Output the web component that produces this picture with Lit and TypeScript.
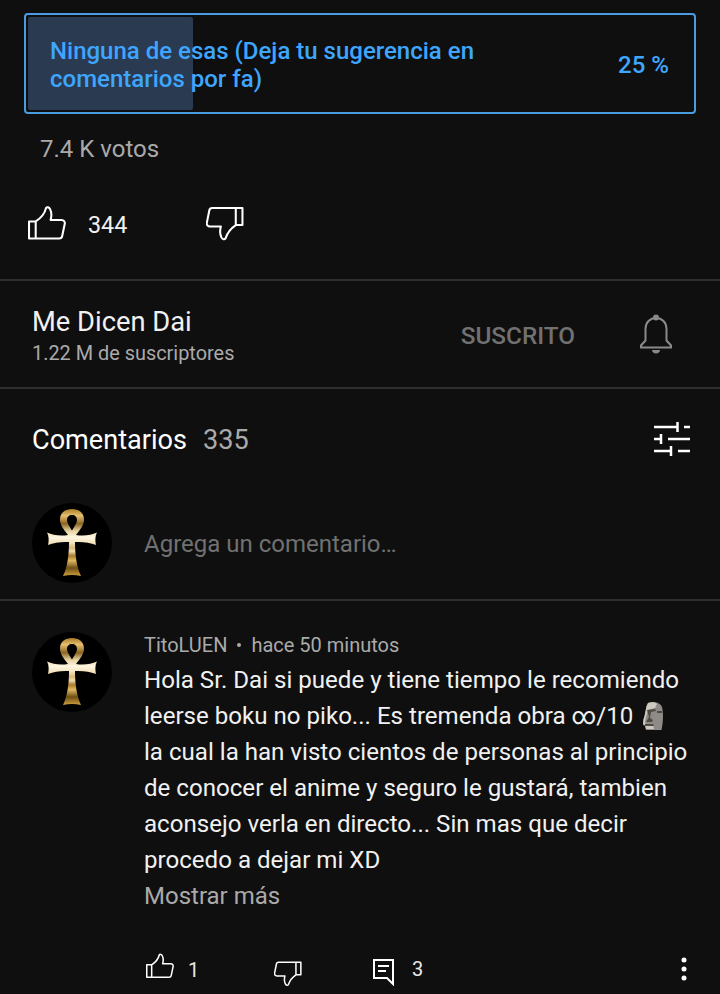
import { LitElement, html, css, svg } from "lit";
import { customElement } from "lit/decorators.js";

const ankh = svg`<svg class="av" viewBox="0 0 80 80" aria-hidden="true">
  <defs><linearGradient id="g" x1="0" y1="0" x2="0" y2="1">
    <stop offset="0" stop-color="#a87c28"/><stop offset=".1" stop-color="#e6bf70"/><stop offset=".22" stop-color="#8a6420"/>
    <stop offset=".33" stop-color="#e8d4a4"/><stop offset=".42" stop-color="#fff6e2"/><stop offset=".5" stop-color="#f4e4c0"/>
    <stop offset=".58" stop-color="#d8b878"/><stop offset=".63" stop-color="#f0dcae"/><stop offset=".7" stop-color="#a87a2a"/>
    <stop offset=".77" stop-color="#e0b860"/><stop offset=".88" stop-color="#6e4e14"/><stop offset="1" stop-color="#d0a040"/></linearGradient></defs>
  <circle cx="40" cy="40" r="40" fill="#000"/>
  <path fill="url(#g)" fill-rule="evenodd" d="M40 6C33 6 28 10 28 16.500 28 22 32 27 36 32 28 33.500 21 32 15 29.500 17 33 17 38 16 42 22 39.500 30 38.500 37 39 37 53 35 65 31 73 37 71.500 43 71.500 49 73 45 65 43 53 43 39 50 38.500 58 39.500 64 42 63 38 63 33 65 29.500 59 32 52 33.500 44 32 48 27 52 22 52 16.500 52 10 47 6 40 6ZM40 12C43 12 45 14 45 17 45 20 42 24 40 27.500 38 24 35 20 35 17 35 14 37 12 40 12Z"/>
</svg>`;

const thumbUp = svg`<path d="M1 15.500h6.500V32H1ZM7.500 32H30.500c1.500 0 2.500-.8 2.800-2.300l2.500-12c.4-2-1-3.700-3-3.700H22c1-3.500 1-7.500-.5-10.500C20.500 1.500 18.500 1 17.500 2.500 16.500 7 12 12.500 7.500 15.500"/>`;
const thumbDown = svg`<path d="M35.500 18H29V1.500h6.500ZM29 1.500H6C4.500 1.500 3.500 2.300 3.200 3.800L.8 15.800C.4 17.800 1.800 19.500 3.800 19.500H14.500c-1 3.500-1 7.500.5 10.500 1 2 3 2.500 4 1C20.500 26.500 24.500 21 29 18"/>`;

@customElement("app-root")
export class AppRoot extends LitElement {
  static styles = css`
    :host { display: block; width: 720px; height: 994px; overflow: hidden; background: #0f0f0f; color: #fff; font-family: Roboto, sans-serif; }
    .poll { position: relative; margin: 13px 24px 0; height: 101px; box-sizing: border-box; border: 2px solid #4a9be0; border-radius: 4px; padding: 2px 25px 0 24px; display: flex; align-items: center; justify-content: space-between; color: #3ea6ff; font-size: 24px; font-weight: 500; line-height: 28px; }
    .fill { position: absolute; left: 2px; top: 2px; bottom: 2px; width: 165px; background: #2a3a50; border-radius: 2px; }
    .poll span { position: relative; }
    .votes { margin: 21px 0 0 40px; font-size: 24px; line-height: 28px; color: #aaa; }
    .likes { display: flex; align-items: center; height: 38px; margin: 41px 0 0 28px; }
    .likes .n { margin-left: 22px; width: 118px; padding-top: 3px; font-size: 23.300px; color: #f1f1f1; }
    .likes .dn { margin-top: 1px; }
    .ic { fill: none; stroke: #fff; stroke-width: 2; stroke-linejoin: round; display: block; }
    .sep { height: 2px; background: #2e2e2e; }
    .sep.a { margin-top: 37px; }
    .chan { height: 106px; box-sizing: border-box; padding: 0 48px 0 32px; display: flex; align-items: center; justify-content: space-between; }
    .chan .who { padding-top: 4px; }
    .chan .name { font-size: 27.300px; line-height: 30px; color: #f1f1f1; }
    .chan .subs { font-size: 19.900px; line-height: 24px; margin-top: 5px; color: #aaa; }
    .chan .right { display: flex; align-items: center; gap: 65px; }
    .sus { font-size: 24.300px; font-weight: 500; color: #717171; padding-top: 2px; }
    .chead { height: 100px; box-sizing: border-box; padding: 0 30px 0 32px; display: flex; align-items: center; justify-content: space-between; font-size: 27.100px; }
    .chead .l { display: flex; gap: 16px; padding-top: 2px; }
    .chead .c { color: #aaa; }
    .add { display: flex; align-items: center; gap: 32px; padding: 14px 32px 16px; font-size: 24px; color: #717171; }
    .add span { padding-top: 2px; }
    .av { width: 80px; height: 80px; display: block; flex: none; }
    .cm { display: flex; gap: 32px; padding: 31px 32px 0; }
    .body { flex: 1; min-width: 0; padding-top: 1px; }
    .meta { font-size: 20px; line-height: 24px; color: #aaa; display: flex; align-items: center; }
    .meta i { width: 4px; height: 4px; border-radius: 50%; background: #aaa; margin: 0 10px; }
    .txt { margin-top: 5px; font-size: 24.100px; line-height: 36px; color: #f1f1f1; white-space: nowrap; }
    .moai { display: inline-block; vertical-align: -6px; margin-left: 3px; }
    .more { font-size: 24px; line-height: 36px; color: #aaa; }
    .acts { position: relative; margin-top: 37px; height: 40px; font-size: 20px; color: #e8e8e8; }
    .acts > * { position: absolute; }
    .dots { right: 0; }
  `;

  render() {
    return html`
      <div class="poll">
        <div class="fill"></div>
        <span>Ninguna de esas (Deja tu sugerencia en<br>comentarios por fa)</span>
        <span>25 %</span>
      </div>
      <div class="votes">7.4 K votos</div>
      <div class="likes">
        <svg class="ic" width="38" height="36" viewBox="0 0 37 34">${thumbUp}</svg>
        <span class="n">344</span>
        <svg class="ic dn" width="38" height="36" viewBox="0 0 37 34">${thumbDown}</svg>
      </div>
      <div class="sep a"></div>
      <div class="chan">
        <div class="who"><div class="name">Me Dicen Dai</div><div class="subs">1.22 M de suscriptores</div></div>
        <div class="right">
          <span class="sus">SUSCRITO</span>
          <svg width="32" height="40" viewBox="0 0 32 40" fill="none" stroke="#8a8a8a" stroke-width="2">
            <path d="M1 33.500h30v-2l-4.500-5V15C26.500 8.500 22 4 16 4S5.500 8.500 5.500 15v11.500L1 31.500Z"/>
            <circle cx="16" cy="3.500" r="3" fill="#8a8a8a" stroke="none"/>
            <path d="M12 36h8c0 2-2 3.500-4 3.500s-4-1.500-4-3.500Z" fill="#8a8a8a" stroke="none"/>
          </svg>
        </div>
      </div>
      <div class="sep"></div>
      <div class="chead">
        <div class="l"><span>Comentarios</span><span class="c">335</span></div>
        <svg width="36" height="34" viewBox="0 0 36 34" fill="none" stroke="#fff" stroke-width="2.500">
          <path d="M0 5h24M23.500 0v10M30 5h6M0 17h8M7 12v10M14 17h22M0 29h17M17 24v10M24 29h12"/>
        </svg>
      </div>
      <div class="add">${ankh}<span>Agrega un comentario…</span></div>
      <div class="sep"></div>
      <div class="cm">
        ${ankh}
        <div class="body">
          <div class="meta"><span>TitoLUEN</span><i></i><span>hace 50 minutos</span></div>
          <div class="txt">Hola Sr. Dai si puede y tiene tiempo le recomiendo<br>leerse boku no piko... Es tremenda obra ∞/10 <svg class="moai" width="22" height="28" viewBox="0 0 22 28"><path fill="#8f8a85" d="M6 1c5-2 12-1 14 4 1.500 6 1 13 .5 17l-1 6H4l-1-4-2-1 .5-5 1-3 1-5 1-5Z"/><path fill="#cfc8c0" d="M6 1c3-1 7-1 9 1l-2 4-7 2-2 7-1 5 1 3h7l1 4H4l-1-4-2-1 .5-5 1-3 1-5 1-5Z"/><path fill="#4e4a46" d="M5 8l8-1 1 2-5 1-1 6 3 2-1 2H4l3-5ZM15 9h5v2h-5ZM3 22h8l1 2H3Z"/></svg><br>la cual la han visto cientos de personas al principio<br>de conocer el anime y seguro le gustará, tambien<br>aconsejo verla en directo... Sin mas que decir<br>procedo a dejar mi XD</div>
          <div class="more">Mostrar más</div>
          <div class="acts">
            <svg class="ic" style="left:2px;top:2px" width="28" height="26" viewBox="0 0 37 34" stroke-width="2.700">${thumbUp}</svg>
            <span style="left:44px;top:7px">1</span>
            <svg class="ic" style="left:130px;top:10px" width="28" height="26" viewBox="0 0 37 34" stroke-width="2.700">${thumbDown}</svg>
            <svg style="left:229px;top:8px" width="22" height="27" viewBox="0 0 22 27" fill="none" stroke="#fff" stroke-width="2"><path d="M1 1h19v24l-6-6H1Z"/><path d="M5 7h11M5 12h8"/></svg>
            <span style="left:268px;top:6px">3</span>
            <svg class="dots" style="top:6px" width="8" height="24" viewBox="0 0 8 24" fill="#fff"><circle cx="4" cy="3" r="2.500"/><circle cx="4" cy="12" r="2.500"/><circle cx="4" cy="21" r="2.500"/></svg>
          </div>
        </div>
      </div>
    `;
  }
}
